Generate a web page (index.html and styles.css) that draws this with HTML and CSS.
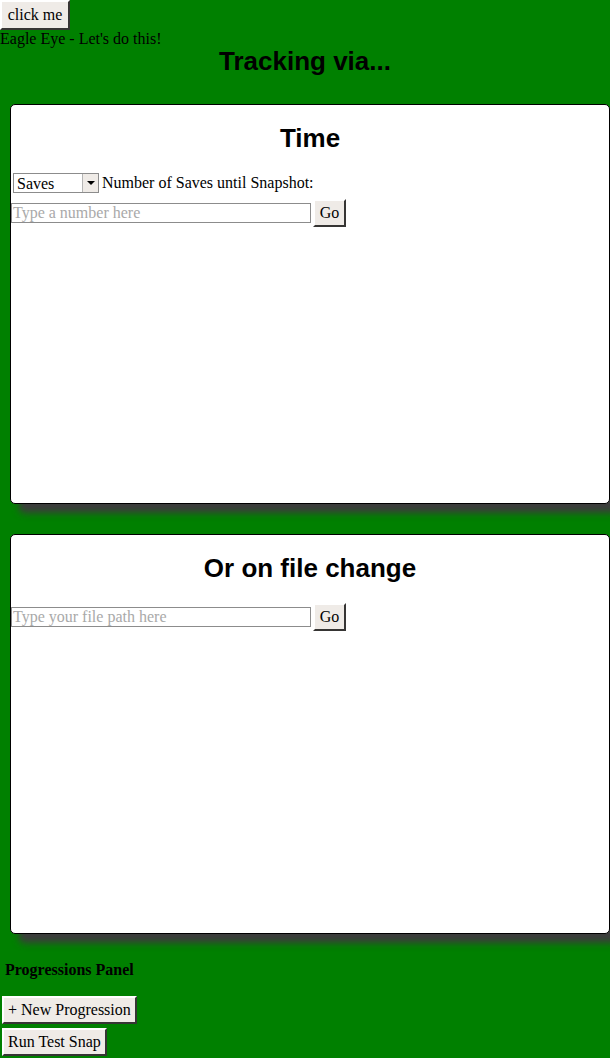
FILE: index.html
```html
<!DOCTYPE html>
<html>
<head>
<meta charset="utf-8">
<link rel="stylesheet" href="styles.css">
</head>
<body>
<button class="btn btn-top">click me</button>
<div class="intro">Eagle Eye - Let's do this!</div>
<h1 class="page-title">Tracking via...</h1>

<section class="card">
  <h2 class="card-title">Time</h2>
  <div class="row row-select">
    <div class="select-wrap">
      <select class="select"><option>Saves</option></select>
      <span class="select-arrow"></span>
    </div>
    <span class="label">Number of Saves until Snapshot:</span>
  </div>
  <div class="row row-input">
    <input class="text-input" type="text" placeholder="Type a number here">
    <button class="btn btn-go">Go</button>
  </div>
</section>

<section class="card card-last">
  <h2 class="card-title">Or on file change</h2>
  <div class="row row-input row-first">
    <input class="text-input" type="text" placeholder="Type your file path here">
    <button class="btn btn-go">Go</button>
  </div>
</section>

<h3 class="panel-title">Progressions Panel</h3>
<div class="actions">
  <button class="btn btn-action">+ New Progression</button>
  <button class="btn btn-action">Run Test Snap</button>
</div>
</body>
</html>
```
FILE: styles.css
```css
html, body {
  margin: 0;
  padding: 0;
}
body {
  background: #008000;
  font-family: "Liberation Serif", "Times New Roman", serif;
  font-size: 16px;
  line-height: 18px;
  color: #000;
  width: 610px;
  height: 1058px;
  overflow: hidden;
}
.btn {
  display: block;
  font-family: "Liberation Serif", "Times New Roman", serif;
  font-size: 16px;
  line-height: 18px;
  color: #000;
  background: #efebe7;
  border: 2px outset #e6e2de;
  border-right-color: #8a8886;
  border-bottom-color: #8a8886;
  border-top-color: #ffffff;
  border-left-color: #ffffff;
  border-radius: 0;
  padding: 4px 5px;
  margin: 0;
  box-sizing: border-box;
}
.btn-top {
  height: 30px;
  width: 70px;
}
.intro {
  height: 17px;
  line-height: 17px;
}
.page-title {
  font-family: "Liberation Sans", Arial, sans-serif;
  font-size: 26px;
  line-height: 28px;
  font-weight: bold;
  text-align: center;
  margin: 0 0 29px 0;
}
.card {
  margin: 0 0 30px 10px;
  width: 600px;
  height: 400px;
  box-sizing: border-box;
  background: #fff;
  border: 1px solid #000;
  border-radius: 5px;
  box-shadow: 9px 9px 7px #3c3c3c;
}
.card-last {
  margin-bottom: 27px;
}
.card-title {
  font-family: "Liberation Sans", Arial, sans-serif;
  font-size: 26px;
  line-height: 30px;
  font-weight: bold;
  text-align: center;
  margin: 18px 0 0 0;
}
.row {
  display: flex;
  align-items: center;
}
.row-select {
  margin-top: 20px;
  padding-left: 2px;
  height: 20px;
}
.row-input {
  margin-top: 6px;
  gap: 2px;
  height: 28px;
}
.row-first {
  margin-top: 20px;
}
.select-wrap {
  position: relative;
  width: 86px;
  height: 20px;
}
.select {
  appearance: none;
  -webkit-appearance: none;
  width: 86px;
  height: 20px;
  box-sizing: border-box;
  margin: 0;
  border: 1px solid #8c8c8c;
  border-radius: 0;
  background: #fff;
  font-family: "Liberation Serif", "Times New Roman", serif;
  font-size: 16px;
  padding: 0 0 0 3px;
  color: #000;
}
.select-arrow {
  position: absolute;
  top: 1px;
  right: 1px;
  width: 16px;
  height: 18px;
  box-sizing: border-box;
  background: #efebe7;
  border-left: 1px solid #b5b5b5;
  pointer-events: none;
}
.select-arrow::after {
  content: "";
  position: absolute;
  left: 4px;
  top: 7px;
  border-left: 4px solid transparent;
  border-right: 4px solid transparent;
  border-top: 4px solid #000;
}
.label {
  margin-left: 3px;
}
.text-input {
  width: 300px;
  height: 20px;
  box-sizing: border-box;
  margin: 0;
  border: 1px solid #8c8c8c;
  border-radius: 0;
  padding: 0 1px;
  font-family: "Liberation Serif", "Times New Roman", serif;
  font-size: 16px;
  background: #fff;
}
.text-input::placeholder {
  color: #a9a9a9;
}
.btn-go {
  width: 33px;
  height: 28px;
  padding: 3px 4px;
}
.panel-title {
  font-size: 16px;
  line-height: 18px;
  font-weight: bold;
  margin: 0 0 17px 5px;
  padding-top: 0;
}
.actions {
  display: flex;
  flex-direction: column;
  align-items: flex-start;
  gap: 4px;
  padding-left: 2px;
}
.btn-action {
  height: 28px;
  padding: 3px 4px;
}
```
